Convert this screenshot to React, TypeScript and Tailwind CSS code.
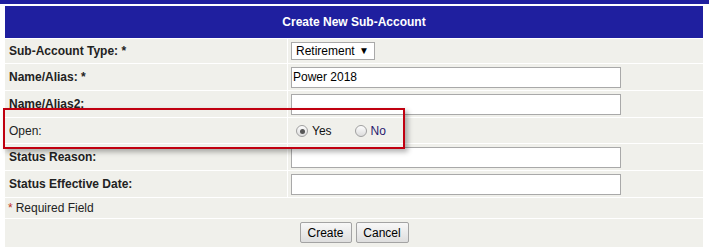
import React from 'react';

const font = { fontFamily: '"Liberation Sans", Arial, sans-serif' };

const Input = ({ value }: { value?: string }) => (
  <div className="w-[330px] h-[21px] bg-white border border-[#a9a9a9] px-px text-[12px] text-black leading-[19px]">
    {value}
  </div>
);

const Radio = ({ checked, label, labelClass }: { checked?: boolean; label: string; labelClass?: string }) => (
  <label className="flex items-center gap-[4px]">
    <span className="w-[12px] h-[12px] rounded-full border border-[#a0a0a0] bg-gradient-to-b from-[#fdfdfd] to-[#dcdcdc] flex items-center justify-center">
      {checked && <span className="w-[5px] h-[5px] rounded-full bg-[#555]" />}
    </span>
    <span className={labelClass ?? 'text-[#111]'}>{label}</span>
  </label>
);

const Row = ({ label, bold = true, children }: { label: string; bold?: boolean; children?: React.ReactNode }) => (
  <div className="grid grid-cols-[282px_415px] gap-px h-[26px]">
    <div className={`bg-[#f0f0eb] pl-[4px] flex items-center text-[12px] text-[#222] ${bold ? 'font-bold' : ''}`}>
      {label}
    </div>
    <div className="bg-[#f0f0eb] pl-[3px] flex items-center">{children}</div>
  </div>
);

const Button = ({ children, w }: { children: React.ReactNode; w: string }) => (
  <button className={`${w} h-[21px] border border-[#a3a3a3] rounded-[2px] bg-gradient-to-b from-[#f8f8f8] to-[#dedede] text-[12px] text-black`}>
    {children}
  </button>
);

export default function App() {
  return (
    <div className="relative w-[709px] h-[248px] bg-white overflow-hidden" style={font}>
      {/* top strip */}
      <div className="h-[4px] bg-[#1f1f9f]" />

      <div className="ml-[4px] mt-px w-[700px] bg-white p-px flex flex-col gap-px">
        <div className="h-[32px] bg-[#1f1f9f] flex items-center justify-center text-white font-bold text-[12px]">
          Create New Sub-Account
        </div>

        <div className="grid grid-cols-[282px_415px] gap-px h-[24px]">
          <div className="bg-[#f0f0eb] pl-[4px] flex items-center text-[12px] text-[#222] font-bold">Sub-Account Type: *</div>
          <div className="bg-[#f0f0eb] pl-[3px] flex items-center">
            <div className="w-[84px] h-[18px] bg-white border border-[#a9a9a9] flex items-center justify-between pl-[4px] pr-[5px] text-[12px] text-black">
              <span>Retirement</span>
              <span className="text-[10px] leading-none">▼</span>
            </div>
          </div>
        </div>

        <Row label="Name/Alias: *">
          <Input value="Power 2018" />
        </Row>
        <Row label="Name/Alias2:">
          <Input />
        </Row>
        <div className="grid grid-cols-[282px_415px] gap-px h-[25px]">
          <div className="bg-[#f0f0eb] pl-[4px] flex items-center text-[12px] text-[#222]">Open:</div>
          <div className="bg-[#f0f0eb] pl-[8px] flex items-center gap-[23px] text-[12px] pt-px">
            <Radio checked label="Yes" />
            <Radio label="No" labelClass="text-[#2a1a6e]" />
          </div>
        </div>
        <Row label="Status Reason:">
          <Input />
        </Row>
        <Row label="Status Effective Date:">
          <Input />
        </Row>

        <div className="h-[20px] bg-[#f0f0eb] pl-[3px] flex items-center text-[12px] text-[#222]">
          <span className="text-[#c0301c] mr-[3px]">*</span>Required Field
        </div>

        <div className="h-[28px] bg-[#f0f0eb] flex items-center justify-center gap-[4px] pb-[1px]">
          <Button w="w-[52px]">Create</Button>
          <Button w="w-[53px]">Cancel</Button>
        </div>
      </div>

      {/* red annotation box drawn over the screenshot */}
      <div className="absolute left-[3px] top-[108px] w-[402px] h-[41px] border-2 border-[#c00010] shadow-[3px_3px_5px_rgba(0,0,0,0.3)]" />
    </div>
  );
}
